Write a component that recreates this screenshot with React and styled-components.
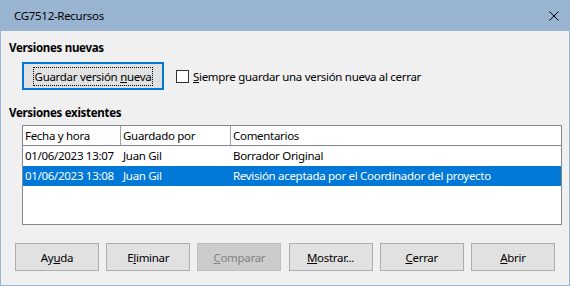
import React from 'react';
import styled, { createGlobalStyle } from 'styled-components';

const GlobalStyle = createGlobalStyle`
  html, body {
    margin: 0;
    padding: 0;
    background: #f0f0f0;
  }
  * {
    box-sizing: border-box;
  }
`;

const rows = [
  { id: 1, date: '01/06/2023 13:07', author: 'Juan Gil', comment: 'Borrador Original' },
  {
    id: 2,
    date: '01/06/2023 13:08',
    author: 'Juan Gil',
    comment: 'Revisión aceptada por el Coordinador del proyecto',
    selected: true,
  },
];

const buttons = [
  { id: 'help', label: ['Ay', 'u', 'da'] },
  { id: 'delete', label: ['E', 'l', 'iminar'] },
  { id: 'compare', label: ['', 'C', 'omparar'], disabled: true },
  { id: 'show', label: ['', 'M', 'ostrar...'] },
  { id: 'close', label: ['', 'C', 'errar'] },
  { id: 'open', label: ['', 'A', 'brir'] },
];

const Mnemonic = ({ parts }) => (
  <>
    {parts[0]}
    <u>{parts[1]}</u>
    {parts[2]}
  </>
);

const App = () => (
  <>
    <GlobalStyle />
    <Window>
      <TitleBar>
        <Title>CG7512-Recursos</Title>
        <CloseIcon viewBox='0 0 10 10'>
          <path d='M0.5 0.5 L9.5 9.5 M9.5 0.5 L0.5 9.5' />
        </CloseIcon>
      </TitleBar>
      <Body>
        <Heading>Versiones nuevas</Heading>
        <NewRow>
          <PushButton $focused>
            <FocusRect>
              Guardar versión <u>n</u>ueva
            </FocusRect>
          </PushButton>
          <CheckLabel>
            <CheckBox />
            <span>
              <u>S</u>iempre guardar una versión nueva al cerrar
            </span>
          </CheckLabel>
        </NewRow>
        <Heading $top={15}>Versiones existentes</Heading>
        <Table>
          <HeaderRow>
            <HeadCell>Fecha y hora</HeadCell>
            <HeadCell>Guardado por</HeadCell>
            <HeadCell $last>Comentarios</HeadCell>
          </HeaderRow>
          {rows.map((row) => (
            <Row key={row.id} $selected={row.selected}>
              <Cell>{row.date}</Cell>
              <Cell>{row.author}</Cell>
              <Cell>{row.comment}</Cell>
            </Row>
          ))}
        </Table>
        <ButtonBar>
          {buttons.map((b) => (
            <DialogButton key={b.id} disabled={b.disabled}>
              <Mnemonic parts={b.label} />
            </DialogButton>
          ))}
        </ButtonBar>
      </Body>
    </Window>
  </>
);

export default App;

const Window = styled.div`
  width: 570px;
  height: 286px;
  display: flex;
  flex-direction: column;
  border: 1px solid #99b4d1;
  border-top: none;
  background: #f0f0f0;
  font-family: 'Noto Sans', 'Liberation Sans', sans-serif;
  font-size: 11.5px;
  letter-spacing: -0.3px;
  color: #000;
`;

const TitleBar = styled.div`
  height: 31px;
  flex: none;
  display: flex;
  align-items: center;
  justify-content: space-between;
  background: #99b4d1;
  padding: 0 10px 0 13px;
`;

const Title = styled.div`
  color: #000;
`;

const CloseIcon = styled.svg`
  width: 10px;
  height: 10px;
  path {
    stroke: #000;
    stroke-width: 1;
    fill: none;
  }
`;

const Body = styled.div`
  flex: 1;
  display: flex;
  flex-direction: column;
  padding: 9px 7px 0 8px;
`;

const Heading = styled.div`
  font-weight: bold;
  line-height: 16px;
  margin-top: ${(p) => p.$top || 0}px;
`;

const NewRow = styled.div`
  display: flex;
  align-items: center;
  gap: 12px;
  margin: 6px 0 0 13px;
`;

const PushButton = styled.div`
  width: 142px;
  height: 28px;
  display: flex;
  align-items: center;
  justify-content: center;
  background: #e1e1e1;
  border: ${(p) => (p.$focused ? '2px solid #0078d7' : '1px solid #adadad')};
`;

const FocusRect = styled.span`
  border: 1px dotted #000;
  padding: 0 1px;
  line-height: 17px;
`;

const CheckLabel = styled.label`
  display: flex;
  align-items: center;
  gap: 4px;
`;

const CheckBox = styled.span`
  width: 13px;
  height: 13px;
  border: 1px solid #333;
  background: #fff;
`;

const Table = styled.div`
  margin: 4px 0 0 13px;
  height: 100px;
  border: 1px solid #828790;
  background: #fff;
`;

const HeaderRow = styled.div`
  display: grid;
  grid-template-columns: 98px 110px 1fr;
  height: 20px;
  border-bottom: 1px solid #828790;
`;

const HeadCell = styled.div`
  padding-left: 2px;
  line-height: 19px;
  border-right: ${(p) => (p.$last ? 'none' : '1px solid #a0a0a0')};
`;

const Row = styled.div`
  display: grid;
  grid-template-columns: 98px 110px 1fr;
  height: 20px;
  line-height: 20px;
  background: ${(p) => (p.$selected ? '#0078d7' : 'transparent')};
  color: ${(p) => (p.$selected ? '#fff' : '#000')};
`;

const Cell = styled.div`
  padding-left: 2px;
  white-space: nowrap;
  overflow: hidden;
`;

const ButtonBar = styled.div`
  display: flex;
  justify-content: space-between;
  margin: 18px 7px 0 6px;
`;

const DialogButton = styled.div`
  width: 84px;
  height: 28px;
  display: flex;
  align-items: center;
  justify-content: center;
  background: ${(p) => (p.disabled ? '#cccccc' : '#e1e1e1')};
  border: 1px solid ${(p) => (p.disabled ? '#bfbfbf' : '#adadad')};
  color: ${(p) => (p.disabled ? '#838383' : '#000')};
`;
